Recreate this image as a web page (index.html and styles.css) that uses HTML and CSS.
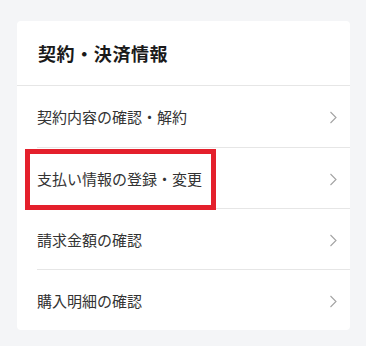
FILE: index.html
```html
<!DOCTYPE html>
<html lang="ja">
<head>
<meta charset="utf-8">
<link rel="stylesheet" href="styles.css">
</head>
<body>
<div class="page">
  <div class="card">
    <div class="card-header">契約・決済情報</div>
    <ul class="menu">
      <li class="menu-item"><span class="label">契約内容の確認・解約</span><svg class="chev" viewBox="0 0 8 13" width="8" height="13"><path d="M1.5 1 L7 6.5 L1.5 12" fill="none" stroke="#a3a3a3" stroke-width="1.1"/></svg></li>
      <li class="menu-item"><span class="label">支払い情報の登録・変更</span><svg class="chev" viewBox="0 0 8 13" width="8" height="13"><path d="M1.5 1 L7 6.5 L1.5 12" fill="none" stroke="#a3a3a3" stroke-width="1.1"/></svg></li>
      <li class="menu-item"><span class="label">請求金額の確認</span><svg class="chev" viewBox="0 0 8 13" width="8" height="13"><path d="M1.5 1 L7 6.5 L1.5 12" fill="none" stroke="#a3a3a3" stroke-width="1.1"/></svg></li>
      <li class="menu-item"><span class="label">購入明細の確認</span><svg class="chev" viewBox="0 0 8 13" width="8" height="13"><path d="M1.5 1 L7 6.5 L1.5 12" fill="none" stroke="#a3a3a3" stroke-width="1.1"/></svg></li>
    </ul>
    <div class="highlight"></div>
  </div>
</div>
</body>
</html>
```
FILE: styles.css
```css
html, body {
  margin: 0;
  padding: 0;
  background: #f4f5f7;
  font-family: "Noto Sans CJK JP", "Noto Sans", sans-serif;
}
.page {
  padding: 21px 16px 0 17px;
}
.card {
  position: relative;
  background: #ffffff;
  border-radius: 4px;
  width: 333px;
}
.card-header {
  height: 65px;
  box-sizing: border-box;
  padding-left: 21px;
  display: flex;
  align-items: center;
  font-size: 18px;
  font-weight: 700;
  letter-spacing: 0.6px;
  color: #1a1a1a;
  border-bottom: 1px solid #e6e6e6;
}
.menu {
  list-style: none;
  margin: 0;
  padding: 0 0 0 20px;
}
.menu-item {
  height: 61px;
  box-sizing: border-box;
  display: flex;
  align-items: center;
  justify-content: space-between;
  padding-right: 13px;
  font-size: 15px;
  color: #333333;
}
.menu-item + .menu-item {
  border-top: 1px solid #e6e6e6;
}
.chev {
  display: block;
  margin-top: 2px;
}
.highlight {
  position: absolute;
  left: 8px;
  top: 128px;
  width: 191px;
  height: 61px;
  box-sizing: border-box;
  border: 5px solid #e4202c;
}
```
